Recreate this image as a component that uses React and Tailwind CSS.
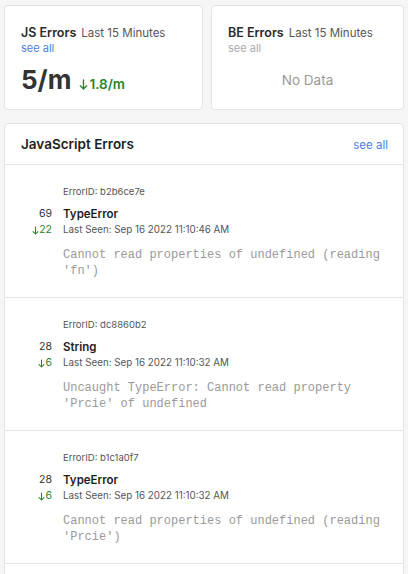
import React from "react";

function Down({ className }) {
  return (
    <svg viewBox="0 0 10 12" className={className} fill="none" stroke="currentColor" strokeWidth="1.5" strokeLinecap="round" strokeLinejoin="round">
      <path d="M5 1v10M1.5 7.5 5 11l3.5-3.5" />
    </svg>
  );
}

const rows = [
  { id: "b2b6ce7e", count: "69", delta: "22", title: "TypeError", seen: "Sep 16 2022 11:10:46 AM", msg: ["Cannot read properties of undefined (reading", "'fn')"] },
  { id: "dc8860b2", count: "28", delta: "6", title: "String", seen: "Sep 16 2022 11:10:32 AM", msg: ["Uncaught TypeError: Cannot read property", "'Prcie' of undefined"] },
  { id: "b1c1a0f7", count: "28", delta: "6", title: "TypeError", seen: "Sep 16 2022 11:10:32 AM", msg: ["Cannot read properties of undefined (reading", "'Prcie')"] },
];

export default function App() {
  return (
    <div className="w-[408px] h-[574px] overflow-hidden bg-[#f6f6f6] px-[4px] pt-[5px]" style={{ fontFamily: "Inter, 'Noto Sans', sans-serif" }}>
      <div className="flex gap-[8px]">
        <div className="w-[199px] h-[105px] bg-white border border-[#e4e4e4] rounded-[4px] pl-[16px] pt-[19px]">
          <div className="flex items-baseline gap-[5px] leading-[16px]">
            <span className="text-[12.5px] font-semibold text-[#2b2b2b]">JS Errors</span>
            <span className="text-[11.5px] text-[#555]">Last 15 Minutes</span>
          </div>
          <div className="text-[11px] leading-[14px] text-[#4a80e2]">see all</div>
          <div className="flex items-baseline gap-[8px] mt-[10px] leading-[30px]">
            <span className="text-[26px] font-bold text-[#333]">5/m</span>
            <span className="flex items-baseline text-[13.5px] font-semibold text-[#23862b]">
              <Down className="w-[9px] h-[11px] mr-[1px] self-center" />1.8/m
            </span>
          </div>
        </div>
        <div className="flex-1 h-[105px] bg-white border border-[#e4e4e4] rounded-[4px] pl-[16px] pt-[19px]">
          <div className="flex items-baseline gap-[5px] leading-[16px]">
            <span className="text-[12.5px] font-semibold text-[#2b2b2b]">BE Errors</span>
            <span className="text-[11.5px] text-[#555]">Last 15 Minutes</span>
          </div>
          <div className="text-[11px] leading-[14px] text-[#aaa]">see all</div>
          <div className="mt-[10px] leading-[30px] text-center pr-[16px] text-[13.5px] text-[#999]">No Data</div>
        </div>
      </div>

      <div className="mt-[13px] bg-white border border-[#e4e4e4] rounded-[4px]">
        <div className="h-[41px] flex items-center justify-between pl-[16px] pr-[15px] border-b border-[#e4e4e4]">
          <span className="text-[13.5px] font-semibold text-[#1e1e1e]">JavaScript Errors</span>
          <span className="pt-[3px] text-[11.5px] text-[#4a80e2]">see all</span>
        </div>
        {rows.map((r) => (
          <div key={r.id} className="border-b border-[#e4e4e4] pt-[20px] pb-[18px] grid grid-cols-[47px_1fr] gap-x-[11px]">
            <div />
            <div className="text-[9.5px] leading-[14px] text-[#555]">ErrorID: {r.id}</div>
            <div className="mt-[6px] text-right text-[10.5px] leading-[18px] text-[#333]">{r.count}</div>
            <div className="mt-[6px] text-[11.5px] font-semibold leading-[18px] text-[#1e1e1e]">{r.title}</div>
            <div className="flex items-center justify-end text-[10.5px] leading-[14px] text-[#23862b]">
              <Down className="w-[7px] h-[9px]" />{r.delta}
            </div>
            <div className="text-[9.8px] leading-[14px] text-[#555]">Last Seen: {r.seen}</div>
            <div />
            <div className="mt-[10px] text-[12px] leading-[16px] text-[#9a9a9a] whitespace-pre" style={{ fontFamily: "'Liberation Mono', monospace" }}>
              {r.msg.map((m, i) => (
                <div key={i}>{m}</div>
              ))}
            </div>
          </div>
        ))}
        <div className="h-[40px]" />
      </div>
    </div>
  );
}
